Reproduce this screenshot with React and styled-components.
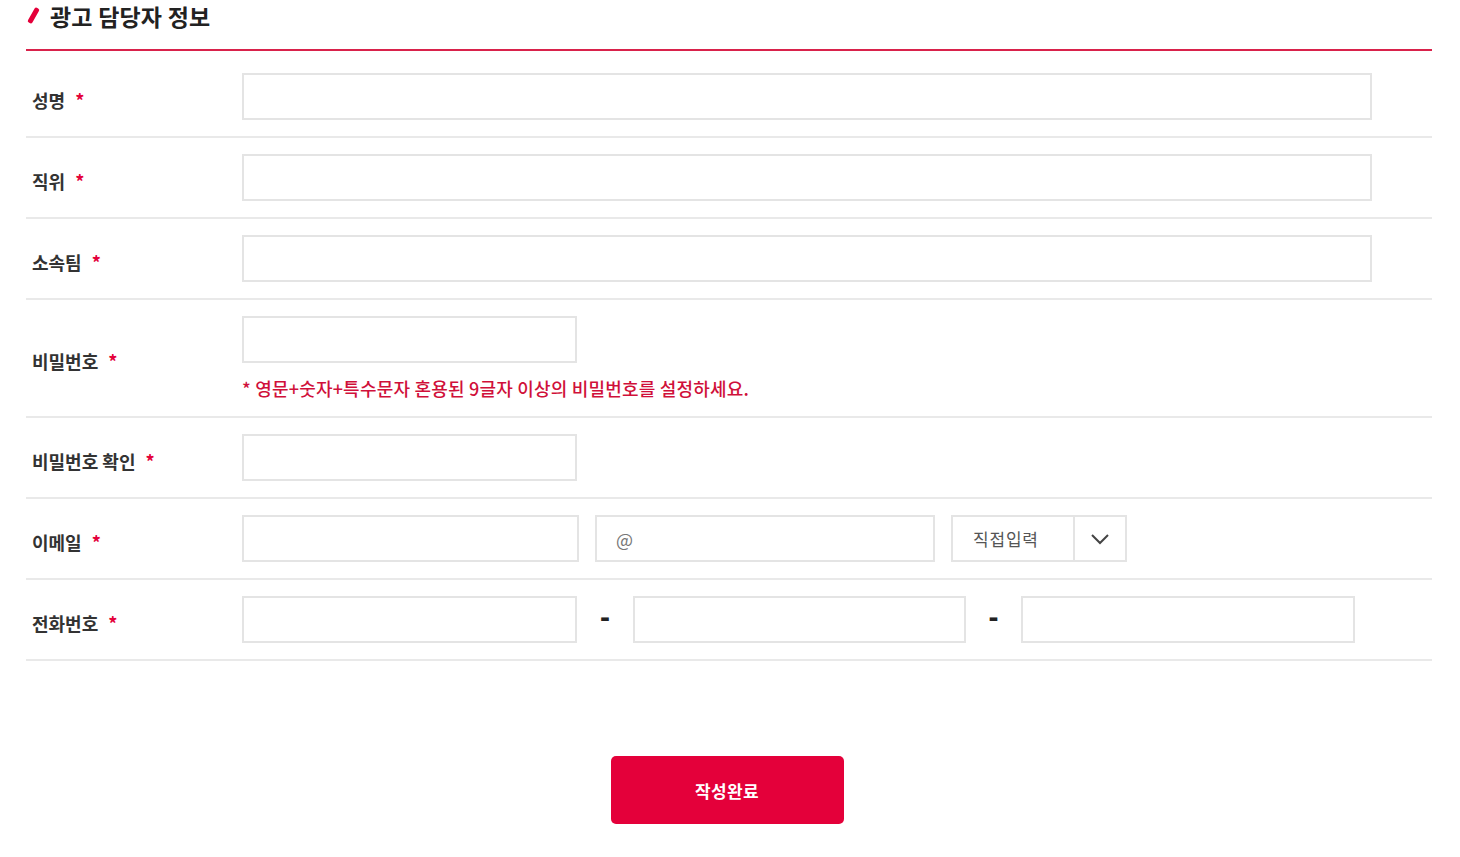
import React from "react";
import styled, { createGlobalStyle } from "styled-components";

const Global = createGlobalStyle`
  html, body { margin: 0; padding: 0; background: #fff; }
  body { font-family: "Noto Sans CJK KR", "Noto Sans", sans-serif; color: #333; }
  * { box-sizing: border-box; }
`;

const Page = styled.div`
  padding: 0 28px 0 26px;
  width: 1460px;
`;

const Header = styled.div`
  display: flex;
  align-items: center;
  gap: 14px;
  height: 51px;
  padding-bottom: 18px;
  border-bottom: 2px solid #d9224b;
`;

const Slash = styled.span`
  display: inline-block;
  width: 5px;
  height: 17px;
  margin-left: 5px;
  background: #e4003a;
  transform: rotate(30deg);
  border-radius: 2px;
`;

const Title = styled.h2`
  margin: 0;
  font-size: 23px;
  font-weight: 700;
  color: #222;
  letter-spacing: 0.2px;
`;

const Row = styled.div`
  display: flex;
  align-items: center;
  padding: ${(p) => (p.$first ? "22px 0 16px" : "16px 0 16px")};
  border-bottom: 2px solid #e9e9e9;
`;

const Label = styled.div`
  width: 216px;
  flex: none;
  padding-left: 6px;
  padding-top: 6px;
  font-size: 18px;
  font-weight: 700;
  color: #333;
`;

const Star = styled.span`
  color: #e4003a;
  margin-left: 10px;
`;

const Field = styled.div`
  display: flex;
  flex-direction: column;
`;

const Inline = styled.div`
  display: flex;
  align-items: center;
`;

const Input = styled.input`
  width: ${(p) => p.$w}px;
  height: 47px;
  border: 2px solid #e4e4e4;
  background: #fff;
  outline: none;
  padding: 0 19px;
  font-family: inherit;
  font-size: 18px;
  color: #777;
  margin-right: ${(p) => p.$mr || 0}px;
  &::placeholder { color: #777; }
`;

const Hint = styled.p`
  margin: 13px 0 0;
  font-size: 18px;
  font-weight: 500;
  line-height: 24px;
  letter-spacing: 0.2px;
  color: #d0103a;
`;

const Select = styled.div`
  width: 176px;
  height: 47px;
  border: 2px solid #e4e4e4;
  display: flex;
  align-items: stretch;
`;

const SelectText = styled.div`
  flex: 1;
  display: flex;
  align-items: center;
  padding-left: 20px;
  font-size: 17px;
  letter-spacing: 0.8px;
  color: #555;
  border-right: 2px solid #e4e4e4;
`;

const SelectArrow = styled.div`
  width: 50px;
  display: flex;
  align-items: center;
  justify-content: center;
`;

const Dash = styled.span`
  width: ${(p) => p.$w}px;
  text-align: center;
  font-family: "Liberation Sans", Arial, sans-serif;
  font-size: 30px;
  font-weight: 700;
  color: #222;
  margin-top: -6px;
`;

const Footer = styled.div`
  display: flex;
  justify-content: center;
  padding-top: 95px;
  padding-right: 4px;
`;

const Submit = styled.button`
  width: 233px;
  height: 68px;
  border: none;
  border-radius: 5px;
  background: #e4003a;
  color: #fff;
  font-family: inherit;
  font-size: 17px;
  font-weight: 700;
  letter-spacing: 0.4px;
  cursor: pointer;
`;

function FormRow({ label, first, children }) {
  return (
    <Row $first={first}>
      <Label>
        {label}
        <Star>*</Star>
      </Label>
      {children}
    </Row>
  );
}

export default function App() {
  return (
    <>
      <Global />
      <Page>
        <Header>
          <Slash />
          <Title>광고 담당자 정보</Title>
        </Header>
        <FormRow label="성명" first>
          <Input $w={1130} />
        </FormRow>
        <FormRow label="직위">
          <Input $w={1130} />
        </FormRow>
        <FormRow label="소속팀">
          <Input $w={1130} />
        </FormRow>
        <FormRow label="비밀번호">
          <Field>
            <Input $w={335} type="password" />
            <Hint>* 영문+숫자+특수문자 혼용된 9글자 이상의 비밀번호를 설정하세요.</Hint>
          </Field>
        </FormRow>
        <FormRow label="비밀번호 확인">
          <Input $w={335} type="password" />
        </FormRow>
        <FormRow label="이메일">
          <Inline>
            <Input $w={337} $mr={16} />
            <Input $w={340} $mr={16} placeholder="@" />
            <Select>
              <SelectText>직접입력</SelectText>
              <SelectArrow>
                <svg width="20" height="12" viewBox="0 0 20 12">
                  <path d="M2 2 L10 10 L18 2" fill="none" stroke="#444" strokeWidth="2" />
                </svg>
              </SelectArrow>
            </Select>
          </Inline>
        </FormRow>
        <FormRow label="전화번호">
          <Inline>
            <Input $w={335} />
            <Dash $w={56}>-</Dash>
            <Input $w={333} />
            <Dash $w={55}>-</Dash>
            <Input $w={334} />
          </Inline>
        </FormRow>
        <Footer>
          <Submit>작성완료</Submit>
        </Footer>
      </Page>
    </>
  );
}
